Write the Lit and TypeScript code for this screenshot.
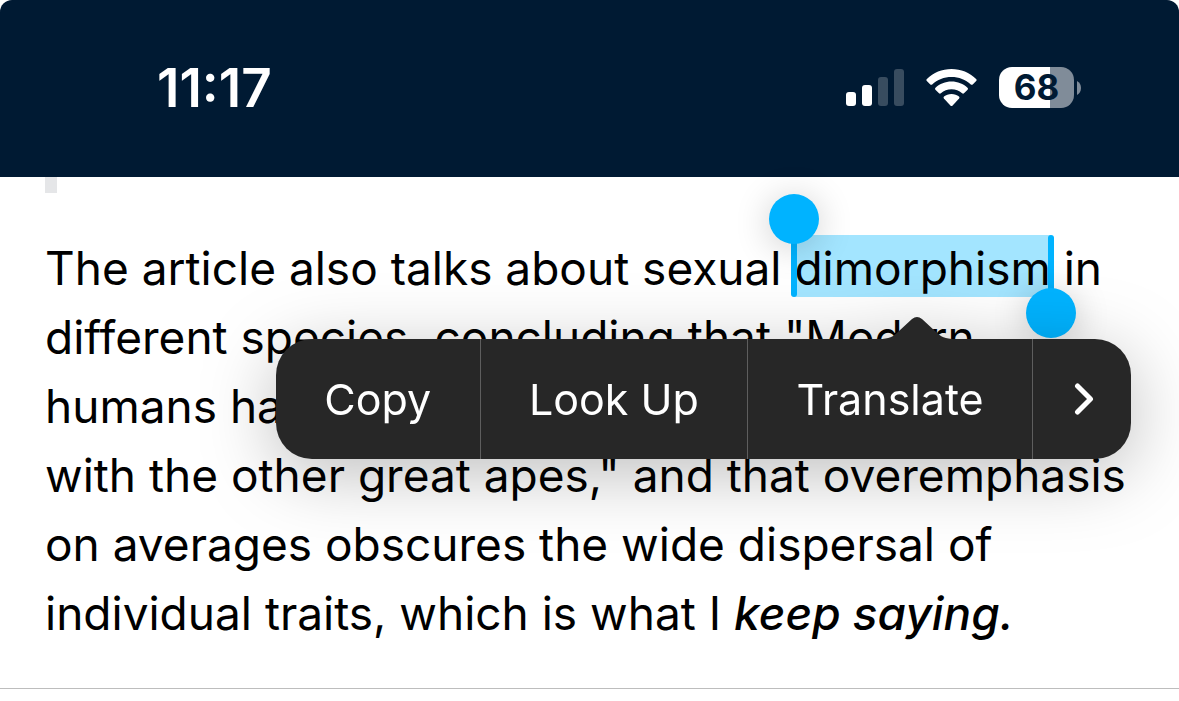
import { LitElement, html, css } from "lit";
import { customElement } from "lit/decorators.js";

@customElement("status-bar")
class StatusBar extends LitElement {
  static styles = css`
    :host {
      display: block;
    }
    .bar {
      display: flex;
      align-items: center;
      justify-content: space-between;
      height: 177px;
      box-sizing: border-box;
      padding: 0 98px 2px 157px;
      background: #001a33;
      border-radius: 12px 12px 0 0;
      color: #fff;
      font-family: Inter, "Liberation Sans", sans-serif;
    }
    .time {
      font-size: 53px;
      line-height: 60px;
      font-weight: 600;
    }
    .icons {
      display: flex;
      align-items: center;
      gap: 22px;
    }
    .icon {
      display: block;
    }
    .battery {
      display: flex;
      align-items: center;
      gap: 3px;
    }
    .level {
      width: 75px;
      height: 41px;
      border-radius: 13px;
      background: linear-gradient(to right, #fff 68%, #808c99 68%);
      color: #001a33;
      font-size: 35px;
      line-height: 41px;
      font-weight: 700;
      text-align: center;
    }
  `;

  render() {
    return html`
      <header class="bar">
        <time class="time">11:17</time>
        <div class="icons">
          <svg class="icon" width="58" height="38" viewBox="0 0 58 38" fill="#fff" aria-label="Signal">
            <rect x="0" y="23" width="10" height="14" rx="3" />
            <rect x="16" y="16" width="10" height="21" rx="3" />
            <rect x="32" y="8" width="10" height="29" rx="3" opacity="0.22" />
            <rect x="48" y="0" width="10" height="37" rx="3" opacity="0.22" />
          </svg>
          <svg class="icon" width="51" height="38" viewBox="0 0 51 38" fill="#fff" aria-label="Wi-Fi">
            <path d="M25.500 0C35 0 43.600 3.700 50.100 9.900Q51.100 10.900 50.200 11.900L46.700 15.400Q45.800 16.300 44.800 15.400C39.700 10.600 32.900 8 25.500 8S11.300 10.600 6.200 15.400Q5.200 16.300 4.300 15.400L0.800 11.900Q-0.100 10.900 0.900 9.900C7.400 3.700 16 0 25.500 0Z" />
            <path d="M25.500 12.600C31.700 12.600 37.300 14.900 41.500 18.800Q42.500 19.700 41.600 20.700L38 24.200Q37.100 25.100 36.100 24.200C33.200 21.700 29.600 20.200 25.500 20.200S17.800 21.700 14.900 24.200Q13.900 25.100 13 24.200L9.400 20.700Q8.500 19.700 9.500 18.800C13.700 14.900 19.300 12.600 25.500 12.600Z" />
            <path d="M25.500 25C28.400 25 31 25.900 33 27.500Q34 28.400 33.100 29.400L26.600 36.500Q25.500 37.500 24.400 36.500L17.900 29.400Q17 28.400 18 27.500C20 25.900 22.600 25 25.500 25Z" />
          </svg>
          <div class="battery">
            <div class="level">68</div>
            <svg class="icon" width="4" height="14" viewBox="0 0 4 14" fill="#808c99">
              <path d="M0 0C2.500 1.200 4 3.900 4 7S2.500 12.800 0 14Z" />
            </svg>
          </div>
        </div>
      </header>
    `;
  }
}

@customElement("edit-menu")
class EditMenu extends LitElement {
  static styles = css`
    :host {
      display: block;
      filter: drop-shadow(0 14px 36px rgba(0, 0, 0, 0.26));
    }
    .arrow {
      display: block;
      margin-left: 603px;
    }
    .items {
      display: flex;
      height: 120px;
      border-radius: 36px;
      overflow: hidden;
      background: #272727;
    }
    .item {
      flex: auto;
      margin: 0;
      padding: 0 16px;
      border: 0;
      border-left: 1px solid #5e5e5e;
      background: none;
      color: #fff;
      font-family: Inter, "Liberation Sans", sans-serif;
      font-size: 43px;
      line-height: 52px;
    }
    .item:first-child {
      border-left: 0;
    }
    .more {
      flex: none;
      width: 99px;
      padding: 0 0 0 4px;
    }
    .chevron {
      display: block;
      margin: 0 auto;
    }
  `;

  render() {
    return html`
      <svg class="arrow" width="76" height="22" viewBox="0 0 76 22" fill="#272727">
        <path d="M0 22C10 22 14 20 20 14L33 2Q38 -2 43 2L56 14C62 20 66 22 76 22Z" />
      </svg>
      <div class="items" role="menu">
        <button class="item">Copy</button>
        <button class="item">Look Up</button>
        <button class="item">Translate</button>
        <button class="item more" aria-label="More">
          <svg class="chevron" width="20" height="34" viewBox="0 0 20 34" fill="none" stroke="#fff" stroke-width="5" stroke-linecap="round" stroke-linejoin="round">
            <path d="M3.500 4L16.500 17L3.500 30" />
          </svg>
        </button>
      </div>
    `;
  }
}

@customElement("app-root")
class AppRoot extends LitElement {
  static styles = css`
    :host {
      display: block;
      background: #fff;
      color: #000;
      font-family: Inter, "Liberation Sans", sans-serif;
    }
    .post {
      position: relative;
      padding: 0 45px 40px;
      border-bottom: 1px solid #bdbdbd;
    }
    .quote-end {
      width: 12px;
      height: 16px;
      background: #e5e6e8;
    }
    .text {
      margin: 41px 0 0;
      font-size: 46px;
      line-height: 69px;
      white-space: nowrap;
    }
    .selected {
      position: relative;
      display: inline-block;
      height: 62px;
      line-height: 66px;
      background: #a3e5ff;
      color: inherit;
    }
    .handle {
      position: absolute;
      top: 0;
      bottom: 0;
      width: 6px;
      border-radius: 3px;
      background: #00b3ff;
    }
    .start {
      left: -3px;
    }
    .end {
      right: -3px;
    }
    .knob {
      position: absolute;
      left: -22px;
      width: 50px;
      height: 50px;
      border-radius: 50%;
      background: #00b3ff;
      box-shadow: 0 4px 36px rgba(0, 0, 0, 0.2);
    }
    .start .knob {
      top: -41px;
    }
    .end .knob {
      bottom: -41px;
    }
    .emphasis {
      font-weight: 500;
    }
    .menu {
      position: absolute;
      top: 140px;
      left: 276px;
      right: 48px;
    }
  `;

  render() {
    return html`
      <status-bar></status-bar>
      <main class="post">
        <div class="quote-end"></div>
        <p class="text">
          The article also talks about sexual
          <mark class="selected"
            >dimorphism<span class="handle start"><span class="knob"></span></span
            ><span class="handle end"><span class="knob"></span></span></mark>
          in<br />
          different species, concluding that "Modern<br />
          humans have<br />
          with the other great apes," and that overemphasis<br />
          on averages obscures the wide dispersal of<br />
          individual traits, which is what I
          <em class="emphasis">keep saying.</em>
        </p>
        <edit-menu class="menu"></edit-menu>
      </main>
    `;
  }
}
